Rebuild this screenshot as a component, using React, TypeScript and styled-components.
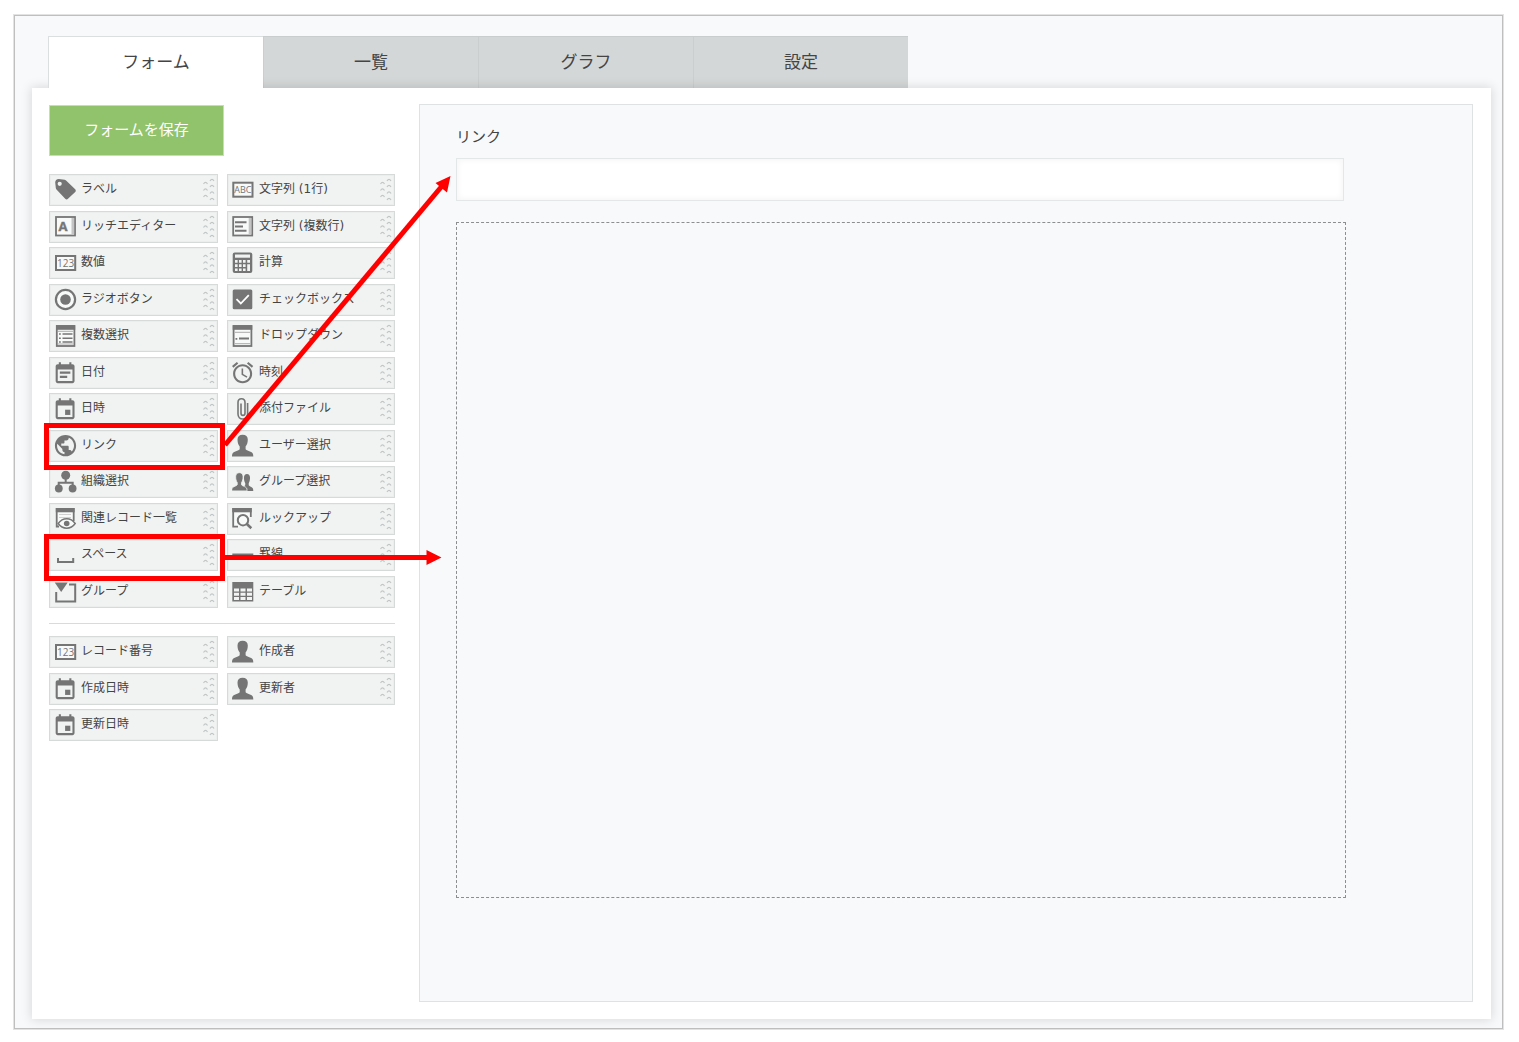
import React, { useState } from "react";
import styled, { createGlobalStyle } from "styled-components";

const GlobalStyle = createGlobalStyle`
  *, *::before, *::after { box-sizing: border-box; }
  body {
    margin: 0;
    background: #fff;
    color: #444;
    font-family: "DejaVu Sans", "Noto Sans CJK JP", sans-serif;
  }
  button, input { font-family: inherit; color: inherit; }
`;

const Page = styled.div`
  min-height: 100vh;
  padding: 15px 16px 13px 14px;
  display: flex;
`;

const Frame = styled.main`
  flex: 1;
  display: flex;
  flex-direction: column;
  padding: 20px 11px 9px 17px;
  background: #f7f9fb;
  border: 1px solid #bfbfbf;
  box-shadow: 0 0 0 1px #e3e3e3;
`;

const TabBar = styled.div`
  display: flex;
  margin-left: 16px;
`;

const Tab = styled.button<{ $active: boolean }>`
  position: relative;
  z-index: ${(p) => (p.$active ? 1 : 0)};
  width: 215px;
  height: 52px;
  padding: 0 0 2px;
  border: 1px solid ${(p) => (p.$active ? "#dcdfe0" : "#c9cdce")};
  border-width: 1px 0 0 1px;
  border-left-color: ${(p) => (p.$active ? "#dcdfe0" : "#cacecf")};
  background: ${(p) => (p.$active ? "#fff" : "#d4d7d7")};
  font-size: 17px;
  line-height: 24px;
  cursor: pointer;
`;

const Workspace = styled.section`
  position: relative;
  flex: 1;
  display: flex;
  gap: 24px;
  padding: 16px 18px 17px 17px;
  background: #fff;
  box-shadow: 0 0 10px 1px rgba(0, 0, 0, 0.13);
`;

const Sidebar = styled.aside`
  flex: 0 0 346px;
  display: flex;
  flex-direction: column;
  padding-top: 1px;
`;

const SaveButton = styled.button`
  align-self: flex-start;
  width: 175px;
  height: 51px;
  margin-bottom: 18px;
  padding: 0 0 2px;
  border: 1px solid #c5dfb3;
  background: #91c36c;
  color: #fff;
  font-size: 15px;
  line-height: 22px;
  cursor: pointer;
`;

const Palette = styled.div<{ $height: number }>`
  display: grid;
  grid-template-columns: 169px 168px;
  grid-auto-rows: 32px;
  justify-content: space-between;
  align-content: space-between;
  min-height: ${(p) => p.$height}px;
`;

const Divider = styled.hr`
  width: 100%;
  margin: 15px 0 12px;
  border: 0;
  border-top: 1px solid #d8dadb;
`;

const PaletteItem = styled.button<{ $column: number }>`
  grid-column: ${(p) => p.$column};
  display: flex;
  align-items: center;
  padding: 0 2px 0 4px;
  border: 1px solid #d6dad9;
  background: #f1f3f3;
  box-shadow: inset 0 0 0 1px #ebeeed;
  text-align: left;
  cursor: move;
`;

const ItemIcon = styled.svg`
  flex: none;
  width: 24px;
  height: 24px;
  color: #757575;
`;

const ItemLabel = styled.span`
  flex: 1;
  padding: 0 0 2px 3px;
  font-size: 12px;
  line-height: 18px;
  white-space: nowrap;
`;

const Grip = styled.svg`
  flex: none;
  width: 12px;
  height: 24px;
`;

const Canvas = styled.section`
  flex: 1;
  min-width: 0;
  display: flex;
  flex-direction: column;
  padding: 21px 126px 103px 36px;
  border: 1px solid #dfe2e2;
  background: #f7f9fb;
`;

const FieldLabel = styled.label`
  margin-bottom: 10px;
  font-size: 15px;
  line-height: 22px;
`;

const FieldInput = styled.input`
  height: 43px;
  margin: 0 2px 21px 0;
  padding: 0 10px;
  border: 1px solid #e3e7e8;
  background: #fff;
  box-shadow: inset 0 0 5px 2px #f7f7f7;
  font-size: 15px;
`;

const SpaceArea = styled.div`
  flex: 1;
  min-height: 200px;
  border: 1px dashed #8c8e8f;
`;

const Annotations = styled.svg`
  position: absolute;
  top: 0;
  left: 0;
  width: 420px;
  height: 500px;
  pointer-events: none;
`;

const BG = "#f8f9f9";
const C = "currentColor";

const numberBox = (text: string, x: number, y: number) => (
  <>
    <rect x={x + 1} y={y + 1} width="19.2" height="14" fill={BG} stroke={C} strokeWidth="2" />
    <text
      x={x + 10.6}
      y={y + 11.7}
      fontSize={text === "ABC" ? 9 : 10}
      textAnchor="middle"
      fontFamily="Open Sans, sans-serif"
      fill={C}
    >
      {text}
    </text>
  </>
);

const calendarFrame =
  "M19 3h-1V1h-2v2H8V1H6v2H5c-1.1 0-2 .9-2 2v14c0 1.1.9 2 2 2h14c1.1 0 2-.9 2-2V5c0-1.1-.9-2-2-2zm0 16H5V8h14v11z";

const person =
  "M10.600 .8C7.400 .8 5.500 2.600 5.500 5.600c0 2.800.7 5.300 2.200 6.900v2.700c-.5 1-4.200 2-6 3C.3 19 0 20.500 0 22.500h21.300c0-2-.3-3.500-1.700-4.300-1.800-1-5.500-2-6-3v-2.700c1.500-1.600 2.200-4.100 2.200-6.900 0-3-1.900-4.800-5.200-4.800z";

const icons: Record<string, React.ReactNode> = {
  label: (
    <path
      transform="translate(-.6 -1)"
      fill={C}
      d="M21.800 12.200l-8.600-8.200C12.700 3.400 12 3 11.300 2.800L5.500 2C3.300 1.900 1.700 3.500 1.800 5.600l.6 5.300c.1.700.4 1.300.9 1.800l8.500 9.100c.8.800 2 .8 2.800 0l7.200-6.800c.8-.8.8-2 0-2.800zM6.300 8.900a2.100 2.100 0 1 1 0-4.200 2.100 2.100 0 0 1 0 4.200z"
    />
  ),
  rich: (
    <>
      <rect x="2" y="2" width="19" height="18.500" fill={BG} stroke={C} strokeWidth="1.800" />
      <rect x="17.500" y="3" width="2.700" height="16.600" fill="#c4c4c4" />
      <text x="9" y="16" fontSize="13" fontWeight="700" textAnchor="middle" fontFamily="Open Sans, sans-serif" fill={C} stroke={C} strokeWidth=".4">
        A
      </text>
    </>
  ),
  number: numberBox("123", 1, 4),
  text: numberBox("ABC", 0.3, 3.7),
  radio: (
    <>
      <circle cx="11.500" cy="11.500" r="9.600" fill={BG} stroke={C} strokeWidth="2.200" />
      <circle cx="11.500" cy="11.500" r="5.300" fill={C} />
    </>
  ),
  multi: (
    <>
      <rect x="2.800" y="2" width="17.600" height="20" fill={BG} stroke={C} strokeWidth="1.800" />
      <path fill={C} d="M2 1.200h19.200v4.600H2z" />
      <path stroke="#aaa" d="M4 7.300h15M4 20h15" />
      <path stroke={C} strokeWidth="1.500" d="M5 10h1.800M8.500 10h10M5 14.200h1.800M8.500 14.200h10M5 18h1.800M8.500 18h10" />
    </>
  ),
  date: (
    <g transform="translate(-1.500 .1) scale(1.050)" fill={C}>
      <path d={calendarFrame} />
      <path d="M7 10h10v2H7zM7 14h7v2H7z" />
    </g>
  ),
  datetime: (
    <g transform="translate(-1.500 .1) scale(1.050)" fill={C}>
      <path d={calendarFrame} />
      <path d="M12 12h5v5h-5z" />
    </g>
  ),
  link: (
    <path
      transform="translate(-1.200 -1) scale(1.060)"
      fill={C}
      d="M12 2C6.480 2 2 6.480 2 12s4.480 10 10 10 10-4.480 10-10S17.520 2 12 2zm-1 17.930c-3.950-.49-7-3.850-7-7.930 0-.62.08-1.210.21-1.790L9 15v1c0 1.100.9 2 2 2v1.930zm6.900-2.540c-.26-.81-1-1.390-1.900-1.390h-1v-3c0-.55-.45-1-1-1H8v-2h2c.55 0 1-.45 1-1V7h2c1.100 0 2-.9 2-2v-.41c2.930 1.190 5 4.060 5 7.410 0 2.080-.8 3.970-2.100 5.390z"
    />
  ),
  org: (
    <>
      <path d="M11.700 8v4.700M4.700 17v-4.300h14V17" fill="none" stroke={C} strokeWidth="2" />
      <g fill={C}>
        <circle cx="11.700" cy="5.300" r="4.500" />
        <circle cx="4.800" cy="18.500" r="3.900" />
        <circle cx="18.600" cy="18.500" r="3.900" />
      </g>
    </>
  ),
  related: (
    <>
      <path d="M5 19.500H2.700V2h17v12" fill={BG} stroke={C} strokeWidth="1.800" />
      <path fill={C} d="M1.800 1h18.800v4.300H1.800z" />
      <path stroke="#d0d0d0" d="M5 7.500h12M5 10.500h12" />
      <path d="M4.200 16.500c4.500-6.400 12.500-6.400 17 0-4.500 6.200-12.500 6.200-17 0z" fill={BG} stroke={C} strokeWidth="1.500" />
      <circle cx="12.700" cy="16.500" r="2.800" fill={C} />
    </>
  ),
  space: <path d="M4 15v4h15.200v-4" fill="none" stroke={C} strokeWidth="2" />,
  group: (
    <>
      <path d="M15 4.500h6.200v17H2.200V12" fill="none" stroke={C} strokeWidth="2" />
      <path d="M.7 2.500h13L7.200 12z" fill={C} />
    </>
  ),
  textarea: (
    <>
      <rect x="1.200" y="2" width="19" height="18.500" fill={BG} stroke={C} strokeWidth="1.800" />
      <rect x="16.700" y="3" width="2.700" height="16.600" fill="#c4c4c4" />
      <path d="M3 7.200h11.500M3 11.500h8M3 15.800h11.500" stroke={C} strokeWidth="2" />
    </>
  ),
  calc: (
    <>
      <rect x=".7" y="1.500" width="19.600" height="20.500" rx="2" fill={C} />
      <path fill="#f1f3f3" d="M3 3.500h15v3.200H3z" />
      <path
        fill="#f1f3f3"
        d="M3 9h2.600v2.800H3zM7 9h2.600v2.800H7zM11 9h2.600v2.800H11zM15.200 9H18v2.800h-2.800zM3 13.200h2.600V16H3zM7 13.200h2.600V16H7zM11 13.200h2.600V16H11zM15.200 13.200H18v6.900h-2.800zM3 17.400h2.600v2.700H3zM7 17.400h2.600v2.700H7zM11 17.400h2.600v2.700H11z"
      />
    </>
  ),
  check: (
    <>
      <rect x=".7" y="1.600" width="19.600" height="19.600" rx="1.500" fill={C} />
      <path d="M4.500 11.200l4.300 4.300 8-8.300" fill="none" stroke="#fff" strokeWidth="1.800" />
    </>
  ),
  dropdown: (
    <>
      <rect x="1.600" y="2" width="17.800" height="20" fill={BG} stroke={C} strokeWidth="1.800" />
      <path fill={C} d="M.7 1.200h19.600v4.600H.7z" />
      <path stroke="#aaa" d="M3 8.300h15M3 19.700h15" />
      <path stroke={C} strokeWidth="1.800" d="M3.500 14.800h1.800M7 14.500h10" />
    </>
  ),
  time: (
    <path
      transform="translate(-2.100 -1) scale(1.060)"
      fill={C}
      d="M22 5.720l-4.600-3.860-1.290 1.530 4.600 3.860L22 5.720zM7.880 3.390L6.600 1.860 2 5.710l1.290 1.530 4.590-3.850zM12.500 8H11v6l4.750 2.850.75-1.230-4-2.370V8zM12 4c-4.970 0-9 4.030-9 9s4.020 9 9 9c4.970 0 9-4.030 9-9s-4.030-9-9-9zm0 16c-3.870 0-7-3.130-7-7s3.130-7 7-7 7 3.130 7 7-3.130 7-7 7z"
    />
  ),
  file: (
    <path
      d="M15.600 6v11c0 2.900-2 5-4.800 5S6 19.900 6 17V5.500C6 3.300 7.500 1.800 9.500 1.800S13 3.300 13 5.500v10.700c0 1.300-.8 2.200-2 2.200s-2-.9-2-2.200V6.500"
      fill="none"
      stroke={C}
      strokeWidth="1.600"
    />
  ),
  user: <path fill={C} d={person} />,
  users: (
    <g fill={C}>
      <path transform="translate(8.700 3.500) scale(.59 .78)" d={person} />
      <path transform="translate(-.3 2) scale(.72 .84)" d={person} stroke="#f1f3f3" strokeWidth="1" />
    </g>
  ),
  lookup: (
    <>
      <path d="M18.800 10V2H1.200v17.600H6" fill={BG} stroke={C} strokeWidth="1.800" />
      <path fill={C} d="M.3 1h19.400v4.300H.3z" />
      <circle cx="11" cy="13.200" r="5.200" fill={BG} stroke={C} strokeWidth="2" />
      <path d="M14.600 16.800l4.700 4.400" stroke={C} strokeWidth="2.600" />
    </>
  ),
  line: <path d="M.3 11.500h21" stroke={C} strokeWidth="2" />,
  table: (
    <>
      <path fill={C} d="M.3 2h21v19.500h-21z" />
      <path
        fill="#f1f3f3"
        d="M2 8.500h5v3H2zM8.500 8.500h5v3h-5zM15 8.500h5v3h-5zM2 12.800h5v3H2zM8.500 12.800h5v3h-5zM15 12.800h5v3h-5zM2 17.100h5V20H2zM8.500 17.100h5V20h-5zM15 17.100h5V20h-5z"
      />
    </>
  ),
};

type Field = { icon: string; label: string };

const inputFields: Field[] = [
  { icon: "label", label: "ラベル" },
  { icon: "text", label: "文字列 (1行)" },
  { icon: "rich", label: "リッチエディター" },
  { icon: "textarea", label: "文字列 (複数行)" },
  { icon: "number", label: "数値" },
  { icon: "calc", label: "計算" },
  { icon: "radio", label: "ラジオボタン" },
  { icon: "check", label: "チェックボックス" },
  { icon: "multi", label: "複数選択" },
  { icon: "dropdown", label: "ドロップダウン" },
  { icon: "date", label: "日付" },
  { icon: "time", label: "時刻" },
  { icon: "datetime", label: "日時" },
  { icon: "file", label: "添付ファイル" },
  { icon: "link", label: "リンク" },
  { icon: "user", label: "ユーザー選択" },
  { icon: "org", label: "組織選択" },
  { icon: "users", label: "グループ選択" },
  { icon: "related", label: "関連レコード一覧" },
  { icon: "lookup", label: "ルックアップ" },
  { icon: "space", label: "スペース" },
  { icon: "line", label: "罫線" },
  { icon: "group", label: "グループ" },
  { icon: "table", label: "テーブル" },
];

const systemFields: Field[] = [
  { icon: "number", label: "レコード番号" },
  { icon: "user", label: "作成者" },
  { icon: "datetime", label: "作成日時" },
  { icon: "user", label: "更新者" },
  { icon: "datetime", label: "更新日時" },
];

const tabs = ["フォーム", "一覧", "グラフ", "設定"];

function FieldPalette({ fields, height }: { fields: Field[]; height: number }) {
  return (
    <Palette $height={height}>
      {fields.map((field, i) => (
        <PaletteItem key={field.label} type="button" $column={(i % 2) + 1}>
          <ItemIcon viewBox="0 0 24 24" aria-hidden="true">
            {icons[field.icon]}
          </ItemIcon>
          <ItemLabel>{field.label}</ItemLabel>
          <Grip viewBox="0 0 12 24" aria-hidden="true">
            <path
              d="M.5 6q2-3.200 4 0M.5 12.500q2-3.200 4 0M.5 19q2-3.200 4 0M7 3q2-3.200 4 0M7 9q2-3.200 4 0M7 15.500q2-3.200 4 0M7 22q2-3.200 4 0"
              fill="none"
              stroke="#c2c5c5"
              strokeWidth="1.200"
            />
          </Grip>
        </PaletteItem>
      ))}
    </Palette>
  );
}

export default function App() {
  const [active, setActive] = useState(0);
  return (
    <>
      <GlobalStyle />
      <Page>
        <Frame>
          <TabBar role="tablist">
            {tabs.map((name, i) => (
              <Tab
                key={name}
                type="button"
                role="tab"
                aria-selected={i === active}
                $active={i === active}
                onClick={() => setActive(i)}
              >
                {name}
              </Tab>
            ))}
          </TabBar>
          <Workspace>
            <Sidebar>
              <SaveButton type="button">フォームを保存</SaveButton>
              <FieldPalette fields={inputFields} height={434} />
              <Divider />
              <FieldPalette fields={systemFields} height={105} />
            </Sidebar>
            <Canvas>
              <FieldLabel htmlFor="link-field">リンク</FieldLabel>
              <FieldInput id="link-field" type="url" />
              <SpaceArea />
            </Canvas>
            <Annotations viewBox="0 0 420 500" aria-hidden="true">
              <g fill="none" stroke="#f00" strokeWidth="5">
                <rect x="14.500" y="337.500" width="176" height="42" />
                <rect x="14.500" y="448.500" width="176" height="42" />
                <path d="M193 357L410 98" />
                <path d="M193 469.500H396" />
              </g>
              <path fill="#f00" d="M418.500 88L415 104.500L403.500 95zM394.500 462L409.500 469.500L394.500 477z" />
            </Annotations>
          </Workspace>
        </Frame>
      </Page>
    </>
  );
}
